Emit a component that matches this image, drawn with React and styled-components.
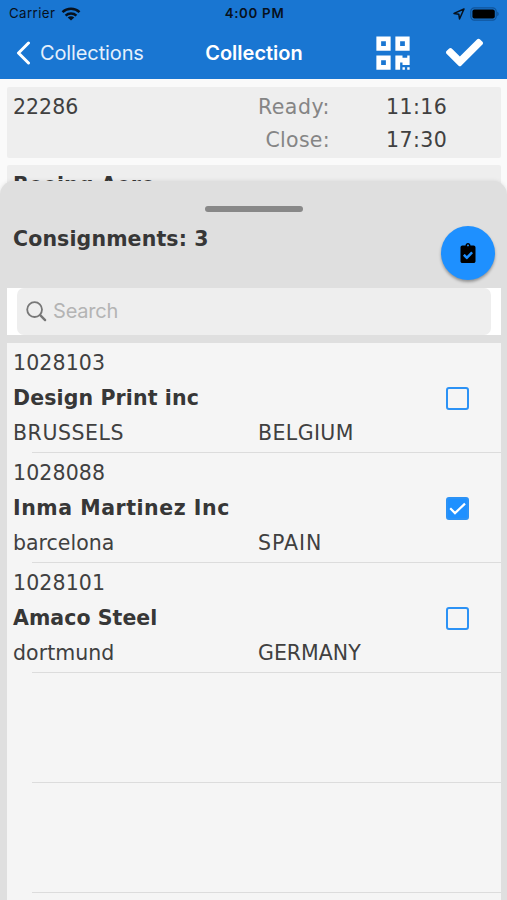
import React from "react";
import styled, { createGlobalStyle } from "styled-components";
import { FaQrcode, FaCheck, FaClipboardCheck } from "react-icons/fa";

const GlobalStyle = createGlobalStyle`
  * { box-sizing: border-box; }
  body { margin: 0; background: #fafafa; overflow: hidden; }
`;

const Screen = styled.div`
  position: relative;
  display: flex;
  flex-direction: column;
  width: 507px;
  height: 900px;
  overflow: hidden;
  background: #fafafa;
  color: #404040;
  font: 20.5px/35px "DejaVu Sans", Verdana, sans-serif;
`;

const Header = styled.header`
  height: 79px;
  flex: none;
  background: #1976d2;
  font-family: Inter, sans-serif;
`;

const StatusBar = styled.div`
  display: grid;
  grid-template-columns: 1fr auto 1fr;
  align-items: center;
  height: 27px;
  padding: 0 7px 0 9px;
  color: #07111d;
  font-size: 13.3px;
  line-height: 27px;
`;

const StatusGroup = styled.div`
  display: flex;
  align-items: center;
  gap: ${(p) => p.$gap}px;
  justify-content: ${(p) => (p.$end ? "flex-end" : "flex-start")};
`;

const Label = styled.span`
  letter-spacing: ${(p) => p.$spacing || 0}px;
  white-space: nowrap;
`;

const Time = styled(Label)`
  font-weight: 600;
`;

const NavBar = styled.nav`
  display: grid;
  grid-template-columns: 190px 128px 1fr;
  align-items: center;
  height: 50px;
  color: #fff;
  font-size: 20px;
  line-height: 50px;
`;

const BackLink = styled.div`
  display: flex;
  align-items: center;
  gap: 9px;
  padding-left: 16px;
  color: #e4f0fc;
`;

const NavLabel = styled(Label)`
  padding-top: 1px;
`;

const NavTitle = styled.div`
  padding-top: 1px;
  text-align: center;
  font-weight: 600;
`;

const NavActions = styled.div`
  display: flex;
  align-items: center;
  gap: 34px;
  padding-left: 56px;
`;

const Content = styled.main`
  display: flex;
  flex-direction: column;
  gap: 7px;
  padding: 8px 6px 0 7px;
`;

const Card = styled.section`
  height: 71px;
  padding: 3px 6px 0;
  background: #eee;
  border-radius: 2px;
`;

const TimesCard = styled(Card)`
  display: grid;
  grid-template-columns: 1fr 84px 165px;
  grid-auto-rows: 33px;
  padding-top: 4px;
  line-height: 33px;
`;

const TimeLabel = styled.div`
  grid-column: 2;
  text-align: right;
  color: #858585;
  white-space: nowrap;
`;

const TimeValue = styled.div`
  padding-left: 56px;
`;

const Strong = styled.div`
  font-weight: 700;
  color: #373737;
  white-space: nowrap;
  letter-spacing: ${(p) => p.$spacing || 0}px;
`;

const Sheet = styled.section`
  position: absolute;
  inset: 181px 0 0;
  display: flex;
  flex-direction: column;
  padding: 0 6px 0 7px;
  background: #dfdfdf;
  border-radius: 14px 14px 0 0;
  box-shadow: 0 0 4px rgba(0, 0, 0, 0.1);
`;

const Handle = styled.div`
  align-self: center;
  flex: none;
  width: 98px;
  height: 6px;
  margin-top: 25px;
  border-radius: 3px;
  background: #888;
`;

const SheetHeader = styled.div`
  display: flex;
  justify-content: space-between;
  height: 76px;
  flex: none;
  padding: 10px 6px 0;
`;

const RoundButton = styled.button`
  display: flex;
  align-items: center;
  justify-content: center;
  width: 54px;
  height: 54px;
  margin-top: 3.5px;
  padding: 0;
  border: 0;
  border-radius: 50%;
  background: #1e90ff;
  color: #000;
  box-shadow: 0 2px 3px rgba(0, 0, 0, 0.34);
`;

const SearchBar = styled.div`
  height: 47px;
  flex: none;
  padding: 0 10px;
  background: #fff;
`;

const SearchField = styled.div`
  display: flex;
  align-items: center;
  gap: 6px;
  height: 47px;
  padding-left: 9px;
  border-radius: 7px;
  background: #eee;
  color: #b4b4b4;
  font: 20px/47px Inter, sans-serif;
`;

const List = styled.div`
  flex: 1;
  min-height: 0;
  margin-top: 8px;
  background: #f5f5f5;
  overflow: hidden;
`;

const Row = styled.article`
  display: grid;
  grid-template-columns: 245px 1fr 55px;
  grid-template-rows: 35px 35px 36px;
  height: 109px;
  padding: 3px 0 0 6px;
  line-height: 35px;
`;

const RowName = styled(Strong)`
  grid-column: 1 / 3;
`;

const RowNumber = styled.div`
  grid-column: 1 / 4;
  letter-spacing: 0.12px;
`;

const Divider = styled.div`
  height: 1px;
  margin-left: 25px;
  background: #dcdcdc;
`;

const Checkbox = styled.div`
  display: flex;
  align-items: center;
  justify-content: center;
  width: 23px;
  height: 23px;
  margin-top: 6px;
  border: 2px solid #2c92f5;
  border-radius: 3px;
  background: ${(p) => (p.$checked ? "#1e90ff" : "transparent")};
`;

const consignments = [
  {
    id: "1028103",
    name: { text: "Design Print inc", spacing: 0.12 },
    city: { text: "BRUSSELS", spacing: 0.55 },
    country: { text: "BELGIUM", spacing: 0.4 },
  },
  {
    id: "1028088",
    name: { text: "Inma Martinez Inc", spacing: 0.54 },
    city: { text: "barcelona", spacing: 0 },
    country: { text: "SPAIN", spacing: 0.95 },
    checked: true,
  },
  {
    id: "1028101",
    name: { text: "Amaco Steel", spacing: 0.05 },
    city: { text: "dortmund", spacing: 0.05 },
    country: { text: "GERMANY", spacing: 0 },
  },
];

const WifiIcon = () => (
  <svg width="20" height="14" viewBox="0 0 20 14" fill="none" stroke="currentColor" strokeWidth="2.5">
    <path d="M1.5 5.2C6.2.7 13.8.7 18.5 5.2M4.6 8.6c3-2.8 7.8-2.8 10.8 0" />
    <path d="M10 13.6 6.7 10.4c1.8-1.7 4.8-1.7 6.6 0z" fill="currentColor" stroke="none" />
  </svg>
);

const LocationIcon = () => (
  <svg width="12" height="12" viewBox="0 0 12 12" fill="none" stroke="currentColor" strokeWidth="1.5" strokeLinejoin="round">
    <path d="M11 1 1 5.4l4.8.8.7 4.8z" />
  </svg>
);

const BatteryIcon = () => (
  <svg width="30" height="14" viewBox="0 0 30 14">
    <rect x=".8" y=".8" width="25.4" height="12.4" rx="3.6" fill="none" stroke="#10549a" strokeWidth="1.2" />
    <rect x="2.4" y="2.4" width="22.4" height="9.2" rx="2" fill="#000" />
    <path d="M27.2 4.8c2 .6 2 3.8 0 4.4z" fill="#10549a" />
  </svg>
);

const BackIcon = () => (
  <svg width="15" height="24" viewBox="0 0 15 24" fill="none" stroke="#fff" strokeWidth="3" strokeLinecap="round" strokeLinejoin="round">
    <path d="M12.5 2 2.5 12l10 10" />
  </svg>
);

const SearchIcon = () => (
  <svg width="21" height="21" viewBox="0 0 21 21" fill="none" stroke="#777" strokeLinecap="round">
    <circle cx="8.6" cy="8.6" r="7.4" strokeWidth="1.8" />
    <path d="m14.2 14.2 4.9 4.9" strokeWidth="2.4" />
  </svg>
);

const TickIcon = () => (
  <svg width="19" height="19" viewBox="0 0 19 19" fill="none" stroke="#fff" strokeWidth="2.2">
    <path d="m2.2 9.3 4.8 4.8L17 4.6" />
  </svg>
);

export default function App() {
  return (
    <Screen>
      <GlobalStyle />
      <Header>
        <StatusBar>
          <StatusGroup $gap={6}>
            <Label $spacing={0.4}>Carrier</Label>
            <WifiIcon />
          </StatusGroup>
          <Time $spacing={0.7}>4:00 PM</Time>
          <StatusGroup $gap={5} $end>
            <LocationIcon />
            <BatteryIcon />
          </StatusGroup>
        </StatusBar>
        <NavBar>
          <BackLink>
            <BackIcon />
            <NavLabel $spacing={-0.12}>Collections</NavLabel>
          </BackLink>
          <NavTitle>Collection</NavTitle>
          <NavActions>
            <FaQrcode size={38} />
            <FaCheck size={37} />
          </NavActions>
        </NavBar>
      </Header>
      <Content>
        <TimesCard>
          <Label>22286</Label>
          <TimeLabel>
            <Label $spacing={0.5}>Ready:</Label>
          </TimeLabel>
          <TimeValue>
            <Label $spacing={0.4}>11:16</Label>
          </TimeValue>
          <TimeLabel>
            <Label $spacing={0.3}>Close:</Label>
          </TimeLabel>
          <TimeValue>
            <Label $spacing={0.4}>17:30</Label>
          </TimeValue>
        </TimesCard>
        <Card>
          <Strong $spacing={0.1}>Boeing Aero</Strong>
        </Card>
      </Content>
      <Sheet>
        <Handle />
        <SheetHeader>
          <Strong $spacing={0.13}>Consignments: 3</Strong>
          <RoundButton aria-label="Confirm consignments">
            <FaClipboardCheck size={20} />
          </RoundButton>
        </SheetHeader>
        <SearchBar>
          <SearchField>
            <SearchIcon />
            <Label $spacing={-0.2}>Search</Label>
          </SearchField>
        </SearchBar>
        <List>
          {consignments.map((c) => (
            <React.Fragment key={c.id}>
              <Row>
                <RowNumber>{c.id}</RowNumber>
                <RowName $spacing={c.name.spacing}>{c.name.text}</RowName>
                <Checkbox $checked={c.checked}>{c.checked && <TickIcon />}</Checkbox>
                <Label $spacing={c.city.spacing}>{c.city.text}</Label>
                <Label $spacing={c.country.spacing}>{c.country.text}</Label>
              </Row>
              <Divider />
            </React.Fragment>
          ))}
          <Row />
          <Divider />
          <Row />
          <Divider />
        </List>
      </Sheet>
    </Screen>
  );
}
